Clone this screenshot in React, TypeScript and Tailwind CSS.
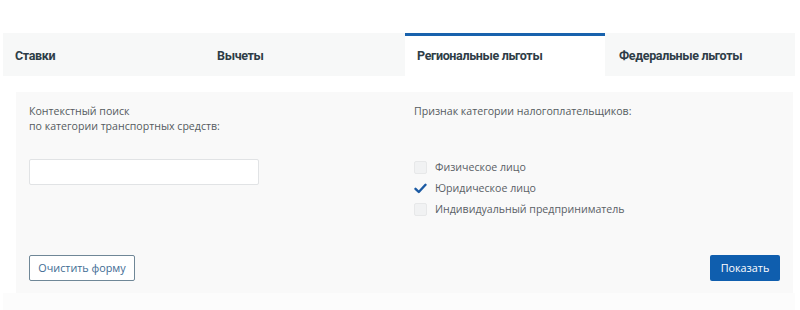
import React from "react";

const tabs = [
  { label: "Ставки", w: "w-[201px]", pl: "pl-[12px]", active: false },
  { label: "Вычеты", w: "w-[201px]", pl: "pl-[13px]", active: false },
  { label: "Региональные льготы", w: "w-[200px]", pl: "pl-[12px]", active: true },
  { label: "Федеральные льготы", w: "flex-1", pl: "pl-[14px]", active: false },
];

function Checkbox({ checked }: { checked?: boolean }) {
  if (checked) {
    return (
      <span className="w-[13px] h-[13px] flex items-center justify-center">
        <svg width="13" height="11" viewBox="0 0 13 11">
          <path d="M1.5 5.8 L4.8 9 L11.5 1.8" fill="none" stroke="#1b5aa3" strokeWidth="2.4" strokeLinecap="round" strokeLinejoin="round" />
        </svg>
      </span>
    );
  }
  return <span className="w-[13px] h-[13px] rounded-[2px] bg-[#f1f2f3] border border-[#e7e8e9]" />;
}

export default function App() {
  return (
    <div className="w-[800px] h-[310px] bg-white pt-[33px] overflow-hidden" style={{ fontFamily: '"Open Sans", "Liberation Sans", sans-serif' }}>
      <div className="ml-[3px] w-[792px] h-[277px] bg-[#fcfcfc]">
        <div className="flex h-[43px] bg-[#f7f8f8]">
          {tabs.map((t) => (
            <div
              key={t.label}
              className={`${t.w} ${t.pl} flex items-center text-[12.5px] font-bold tracking-[-0.35px] text-[#2e3d47] ${
                t.active ? "bg-white border-t-[3px] border-[#1862ad]" : ""
              }`}
              style={{ fontFamily: 'Roboto, "Liberation Sans", sans-serif' }}
            >
              <span className={t.active ? "" : "pt-[3px]"}>{t.label}</span>
            </div>
          ))}
        </div>
        <div className="bg-white pt-[16px] pl-[13px] pr-[2px]">
          <div className="bg-[#f9f9f9] h-[201px] px-[13px] pt-[12px] flex flex-col">
            <div className="flex">
              <div className="w-[385px] flex flex-col">
                <div className="text-[10.6px] leading-[15px] text-[#555b60]">
                  <div>Контекстный поиск</div>
                  <div>по категории транспортных средств:</div>
                </div>
                <input
                  type="text"
                  className="mt-[25px] w-[230px] h-[26px] bg-white border border-[#e1e3e5] rounded-[2px] outline-none"
                />
              </div>
              <div className="flex flex-col">
                <div className="text-[10.6px] leading-[15px] text-[#555b60]">Признак категории налогоплательщиков:</div>
                <div className="mt-[42px] flex flex-col gap-[8px] text-[10.6px] leading-[13px] text-[#5a6066]">
                  <label className="flex items-center gap-[8px]">
                    <Checkbox />
                    <span>Физическое лицо</span>
                  </label>
                  <label className="flex items-center gap-[8px]">
                    <Checkbox checked />
                    <span>Юридическое лицо</span>
                  </label>
                  <label className="flex items-center gap-[8px]">
                    <Checkbox />
                    <span>Индивидуальный предприниматель</span>
                  </label>
                </div>
              </div>
            </div>
            <div className="mt-auto mb-[12px] flex justify-between items-center">
              <button className="h-[26px] w-[106px] border border-[#6f8797] rounded-[2px] bg-white text-[10.8px] text-[#3e6b93]">
                Очистить форму
              </button>
              <button className="h-[26px] w-[70px] rounded-[2px] bg-[#0f5eae] text-[10.8px] text-white">
                Показать
              </button>
            </div>
          </div>
        </div>
      </div>
    </div>
  );
}
